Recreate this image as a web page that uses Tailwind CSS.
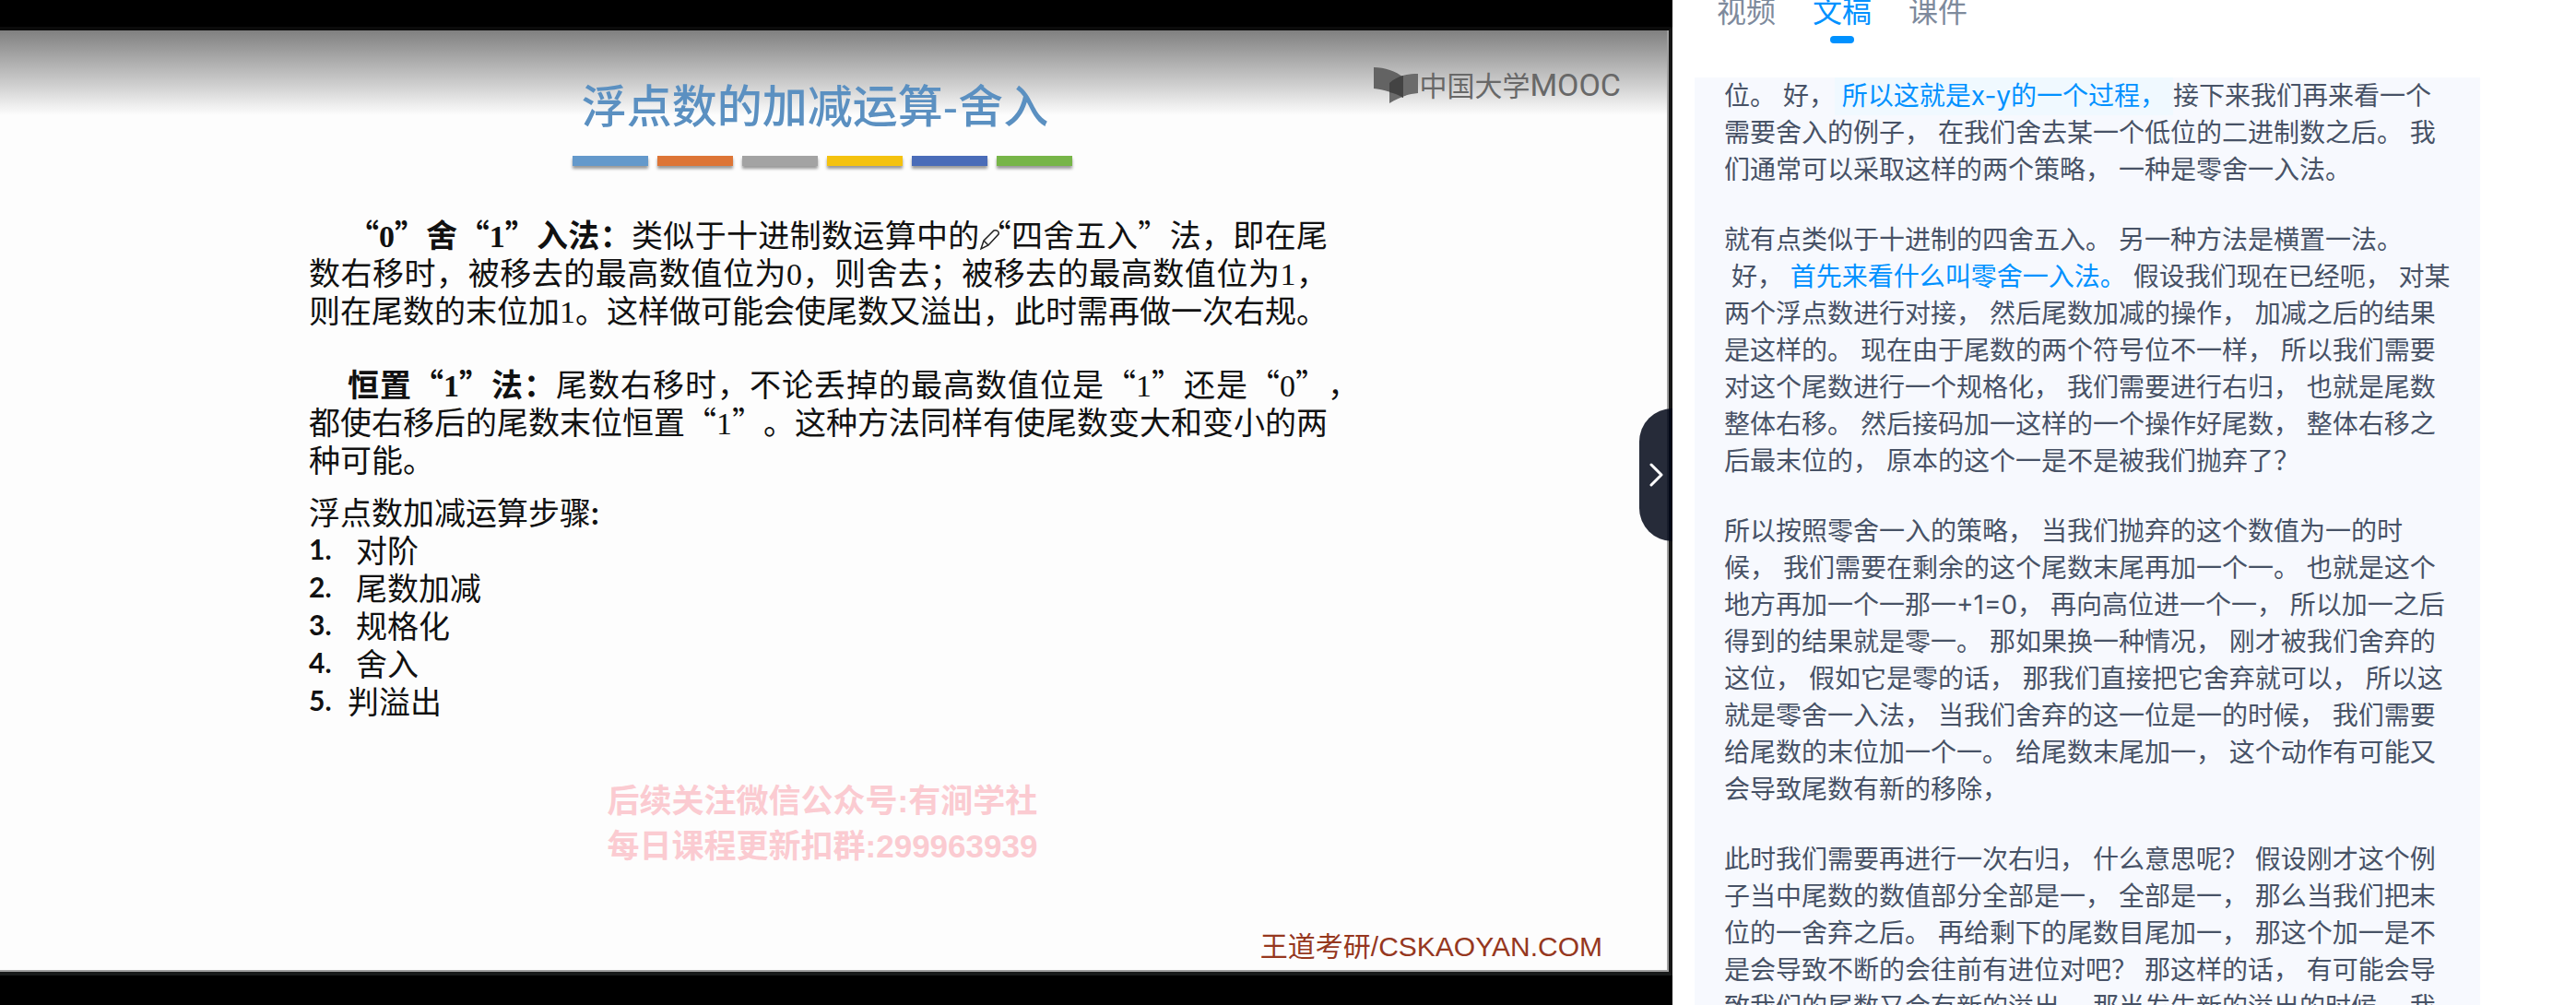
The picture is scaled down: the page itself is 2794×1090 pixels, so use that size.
<!DOCTYPE html>
<html lang="zh-CN">
<head>
<meta charset="utf-8">
<title>浮点数的加减运算-舍入</title>
<script src="https://cdn.jsdelivr.net/npm/@tailwindcss/browser@4"></script>
</head>
<body class="flex h-screen overflow-hidden bg-white font-['Noto_Sans_CJK_SC',sans-serif] [text-spacing-trim:space-all]">

<!-- Video player -->
<main class="relative flex min-w-0 flex-1 flex-col bg-black pt-[29px] pb-8">
  <section class="relative flex flex-1 flex-col border-t-4 border-r-4 border-b-4 border-t-[#0b0b0b] border-r-[#161616] border-b-[#181a1a]">
    <div class="flex flex-1 flex-col border-r-2 border-b-2 border-[#a0a0a0] bg-[#fdfdfd] bg-[linear-gradient(#808080,#a8a8a8_30px,#d0d0d0_60px,#fdfdfd_92px)]">
      <header class="flex flex-col items-center pt-[51px] pr-6">
        <h1 class="pr-4 text-[49px] leading-[64px] font-medium whitespace-nowrap text-[#5b90c1] font-['Liberation_Sans','Noto_Sans_CJK_SC',sans-serif]">浮点数的加减运算-舍入</h1>
        <div class="mt-[21px] flex gap-[10px]">
          <span class="h-[11px] w-[82px] bg-[#6499cb] shadow-[0_3px_3px_#0006]"></span>
          <span class="h-[11px] w-[82px] bg-[#dd7536] shadow-[0_3px_3px_#0006]"></span>
          <span class="h-[11px] w-[82px] bg-[#a3a3a3] shadow-[0_3px_3px_#0006]"></span>
          <span class="h-[11px] w-[82px] bg-[#f4c20f] shadow-[0_3px_3px_#0006]"></span>
          <span class="h-[11px] w-[82px] bg-[#4a6cb8] shadow-[0_3px_3px_#0006]"></span>
          <span class="h-[11px] w-[82px] bg-[#77b548] shadow-[0_3px_3px_#0006]"></span>
        </div>
      </header>

      <article class="mt-[53px] ml-[335px] w-[1105px] text-[34px] leading-[41px] whitespace-nowrap text-[#111]">
        <p>
          <span class="block pl-[42px] [text-align-last:justify]"><b class="font-bold">“<span class="leading-none font-['Liberation_Serif',serif]">0</span>”舍“<span class="leading-none font-['Liberation_Serif',serif]">1</span>”入法：</b>类似于十进制数运算中的<span class="relative">“<svg class="absolute top-[19px] left-0 h-[24px] w-[22px]" viewBox="0 0 22 24" fill="#fdfdfd" stroke="#222" stroke-width="1.5"><path d="M1 22l3-9L15 2c3-1 6 1 5 4L9 18z M4 13l5 5"/></svg></span>四舍五入”法，即在尾</span>
          <span class="block [text-align-last:justify]">数右移时，被移去的最高数值位为<span class="leading-none font-['Liberation_Serif',serif]">0</span>，则舍去；被移去的最高数值位为<span class="leading-none font-['Liberation_Serif',serif]">1</span>，</span>
          <span class="block">则在尾数的末位加<span class="leading-none font-['Liberation_Serif',serif]">1</span>。这样做可能会使尾数又溢出，此时需再做一次右规。</span>
        </p>
        <p class="mt-[39px]">
          <span class="-mr-[34px] block pl-[42px] [text-align-last:justify]"><b class="font-bold">恒置“<span class="leading-none font-['Liberation_Serif',serif]">1</span>”法：</b>尾数右移时，不论丢掉的最高数值位是“<span class="leading-none font-['Liberation_Serif',serif]">1</span>”还是“<span class="leading-none font-['Liberation_Serif',serif]">0</span>”，</span>
          <span class="block">都使右移后的尾数末位恒置“<span class="leading-none font-['Liberation_Serif',serif]">1</span>”。这种方法同样有使尾数变大和变小的两</span>
          <span class="block">种可能。</span>
        </p>
        <h2 class="mt-4">浮点数加减运算步骤<span class="leading-none font-bold font-['Lato',sans-serif]">:</span></h2>
        <ol>
          <li class="flex"><span class="w-[51px] text-[30px] font-bold font-['Lato',sans-serif]">1.</span>对阶</li>
          <li class="flex"><span class="w-[51px] text-[30px] font-bold font-['Lato',sans-serif]">2.</span>尾数加减</li>
          <li class="flex"><span class="w-[51px] text-[30px] font-bold font-['Lato',sans-serif]">3.</span>规格化</li>
          <li class="flex"><span class="w-[51px] text-[30px] font-bold font-['Lato',sans-serif]">4.</span>舍入</li>
          <li class="flex"><span class="w-[42px] text-[30px] font-bold font-['Lato',sans-serif]">5.</span>判溢出</li>
        </ol>
      </article>

      <div class="mt-16 flex justify-center pr-6 text-[35px] leading-[49px] font-bold whitespace-nowrap text-[#fbcbd1] font-['Liberation_Sans','Noto_Sans_CJK_SC',sans-serif]">
        <p>后续关注微信公众号:有涧学社<br>每日课程更新扣群:299963939</p>
      </div>

      <footer class="mt-auto pr-[70px] pb-[5px] text-right text-[30px] leading-10 whitespace-nowrap text-[#96381f] font-['Liberation_Sans','Noto_Sans_CJK_SC',sans-serif]">王道考研/CSKAOYAN.COM</footer>
    </div>

    <!-- Channel watermark -->
    <div class="absolute top-[36px] right-[52px] flex items-center whitespace-nowrap text-[#686868]">
      <svg class="h-[40px] w-[49px]" viewBox="0 0 49 40">
        <path d="M0 1C12 1 24 5 32 12V34C24 29 10 25 0 24z" fill="#636363"/>
        <path d="M17 18C25 10 36 8 48 8V29C36 30 27 34 17 40z" fill="#6b6b6b"/>
        <path d="M17 18C21 14 27 11 32 10V34C27 31 22 29 17 28z" fill="#434343"/>
      </svg>
      <span class="text-[30px] leading-[44px]">中国大学<span class="text-[34px] font-['Roboto',sans-serif]">MOOC</span></span>
    </div>
  </section>

  <button type="button" aria-label="收起侧栏" class="absolute top-[443px] right-0 flex h-36 w-9 items-center rounded-l-[36px] bg-[#000616]/85 pl-[11px]">
    <svg class="h-[26px] w-4" viewBox="0 0 16 26" fill="none" stroke="#fff" stroke-width="3" stroke-linecap="round" stroke-linejoin="round"><path d="M2 2l11 11L2 24"/></svg>
  </button>
</main>

<!-- Transcript panel -->
<aside class="flex w-[980px] shrink-0 flex-col overflow-hidden pr-[104px] pl-6">
  <nav class="-mt-[14px] flex h-[98px] shrink-0 gap-10 pl-6 text-[32px] leading-[48px] text-[#7e8a9c]">
    <a href="#video">视频</a>
    <a href="#text" class="flex flex-col items-center text-[#0091ff]">文稿<span class="mt-[5px] h-2 w-[26px] rounded-full bg-[#0091ff]"></span></a>
    <a href="#slides">课件</a>
  </nav>
  <div class="flex-1 space-y-9 overflow-hidden bg-[#f7f9fe] pl-8 text-[28px] leading-10 whitespace-nowrap text-[#475266] font-['Inter','Noto_Sans_CJK_SC',sans-serif]">
    <p>位。 好，<span class="bg-[#f0f9ff] py-1 text-[#0091ff]">&nbsp;所以这就是x-y的一个过程，&nbsp;</span>接下来我们再来看一个<br>需要舍入的例子， 在我们舍去某一个低位的二进制数之后。 我<br>们通常可以采取这样的两个策略， 一种是零舍一入法。</p>
    <p>就有点类似于十进制的四舍五入。 另一种方法是横置一法。<br>&nbsp;好， <span class="text-[#0091ff]">首先来看什么叫零舍一入法。</span> 假设我们现在已经呃， 对某<br>两个浮点数进行对接， 然后尾数加减的操作， 加减之后的结果<br>是这样的。 现在由于尾数的两个符号位不一样， 所以我们需要<br>对这个尾数进行一个规格化， 我们需要进行右归， 也就是尾数<br>整体右移。 然后接码加一这样的一个操作好尾数， 整体右移之<br>后最末位的， 原本的这个一是不是被我们抛弃了？</p>
    <p>所以按照零舍一入的策略， 当我们抛弃的这个数值为一的时<br>候， 我们需要在剩余的这个尾数末尾再加一个一。 也就是这个<br>地方再加一个一那一+1=0， 再向高位进一个一， 所以加一之后<br>得到的结果就是零一。 那如果换一种情况， 刚才被我们舍弃的<br>这位， 假如它是零的话， 那我们直接把它舍弃就可以， 所以这<br>就是零舍一入法， 当我们舍弃的这一位是一的时候， 我们需要<br>给尾数的末位加一个一。 给尾数末尾加一， 这个动作有可能又<br>会导致尾数有新的移除，</p>
    <p>此时我们需要再进行一次右归， 什么意思呢？ 假设刚才这个例<br>子当中尾数的数值部分全部是一， 全部是一， 那么当我们把末<br>位的一舍弃之后。 再给剩下的尾数目尾加一， 那这个加一是不<br>是会导致不断的会往前有进位对吧？ 那这样的话， 有可能会导<br>致我们的尾数又会有新的溢出， 那当发生新的溢出的时候， 我</p>
  </div>
</aside>
</body>
</html>
